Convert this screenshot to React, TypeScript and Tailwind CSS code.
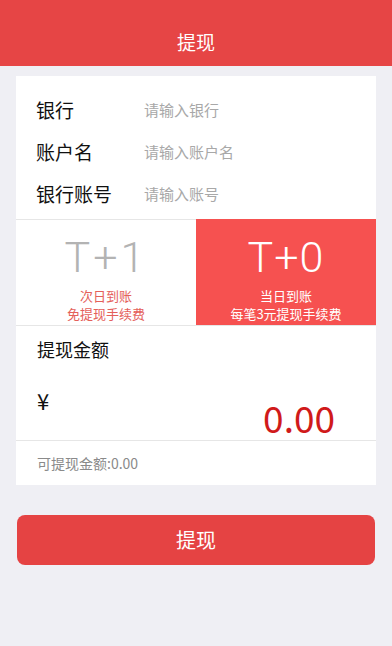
const FONT = "font-['Noto_Sans_CJK_SC','Noto_Sans',sans-serif]";
const LIGHT_NUM = "font-['Roboto','Noto_Sans',sans-serif] font-light";

const FIELDS = [
  { label: "银行", placeholder: "请输入银行" },
  { label: "账户名", placeholder: "请输入账户名" },
  { label: "银行账号", placeholder: "请输入账号" },
];

export default function App() {
  return (
    <div className={`${FONT} min-h-[646px] bg-[#efeff4]`}>
      <header className="flex h-[66px] items-center justify-center bg-[#e64545] pt-[18px] text-[19px] text-white">提现</header>

      <section className="mx-4 mt-[10px] bg-white">
        <div className="pb-[4px] pt-[13px]">
          {FIELDS.map((field) => (
            <div key={field.label} className="flex h-[42px] items-center pl-[20px]">
              <span className="w-[108px] text-[19px] text-[#111]">{field.label}</span>
              <span className="text-[15px] text-[#a8a8a8]">{field.placeholder}</span>
            </div>
          ))}
        </div>

        <div className="grid h-[107px] grid-cols-2 border-y border-[#e6e6e6]">
          <div className="flex flex-col items-center pt-[14px]">
            <span className={`${LIGHT_NUM} text-[43px] leading-[46px] tracking-[3px] text-[#b3b3b3]`}>T+1</span>
            <span className="mt-[7px] text-[13px] leading-[18px] text-[#e4605a]">次日到账</span>
            <span className="text-[13px] leading-[18px] text-[#e4605a]">免提现手续费</span>
          </div>
          <div className="-mt-px flex flex-col items-center bg-[#f65150] pt-[15px] text-white">
            <span className={`${LIGHT_NUM} text-[43px] leading-[46px] tracking-[1px]`}>T+0</span>
            <span className="mt-[7px] text-[13px] leading-[18px]">当日到账</span>
            <span className="text-[13px] leading-[18px]">每笔3元提现手续费</span>
          </div>
        </div>

        <div className="border-b border-[#e6e6e6] pl-[21px] pr-[41px]">
          <div className="flex h-[46px] items-center text-[18px] text-[#111]">提现金额</div>
          <div className="flex h-[68px] items-start justify-between">
            <span className="mt-[12px] text-[22px] text-[#111]">¥</span>
            <span className="mt-[23px] text-[37px] leading-[44px] text-[#d01a1a]">0.00</span>
          </div>
        </div>

        <div className="flex h-[44px] items-center pl-[21px] text-[14px] text-[#8a8a8a]">可提现金额:0.00</div>
      </section>

      <div className="px-[17px] pt-[30px]">
        <button className="h-[50px] w-full rounded-[8px] bg-[#e54343] text-[20px] text-white">提现</button>
      </div>
    </div>
  );
}
